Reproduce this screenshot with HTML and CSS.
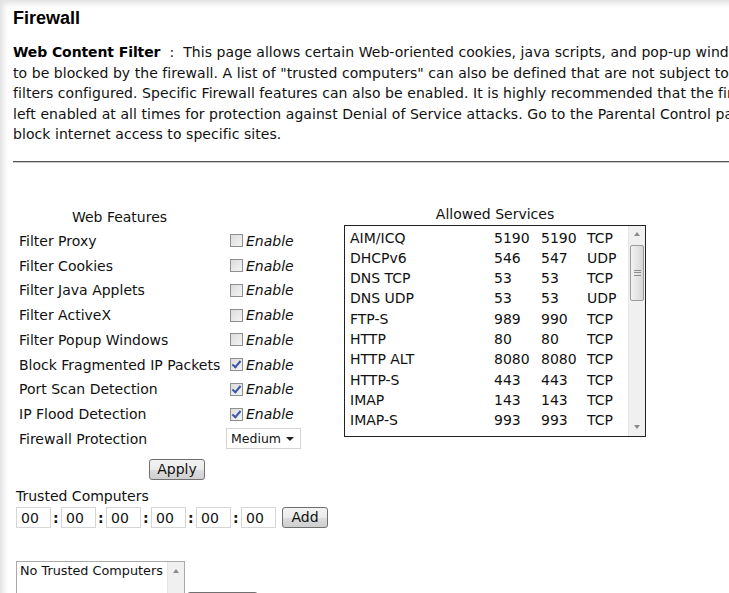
FILE: index.html
```html
<!DOCTYPE html>
<html>
<head>
<meta charset="utf-8">
<title>Firewall</title>
<link rel="stylesheet" href="styles.css">
</head>
<body>
<div class="page">
  <h1>Firewall</h1>
  <p class="intro"><b>Web Content Filter</b> &nbsp;:&nbsp; This page allows certain Web-oriented cookies, java scripts, and pop-up windows<br>
  to be blocked by the firewall. A list of "trusted computers" can also be defined that are not subject to the<br>
  filters configured. Specific Firewall features can also be enabled. It is highly recommended that the firewall be<br>
  left enabled at all times for protection against Denial of Service attacks. Go to the Parental Control page to<br>
  block internet access to specific sites.</p>
  <hr class="rule">

  <div class="panels">
    <div class="features">
      <div class="feat-head">Web Features</div>
      <div class="feat-row"><span class="feat-name">Filter Proxy</span><label class="chk"><input type="checkbox"><i>Enable</i></label></div>
      <div class="feat-row"><span class="feat-name">Filter Cookies</span><label class="chk"><input type="checkbox"><i>Enable</i></label></div>
      <div class="feat-row"><span class="feat-name">Filter Java Applets</span><label class="chk"><input type="checkbox"><i>Enable</i></label></div>
      <div class="feat-row"><span class="feat-name">Filter ActiveX</span><label class="chk"><input type="checkbox"><i>Enable</i></label></div>
      <div class="feat-row"><span class="feat-name">Filter Popup Windows</span><label class="chk"><input type="checkbox"><i>Enable</i></label></div>
      <div class="feat-row"><span class="feat-name">Block Fragmented IP Packets</span><label class="chk"><input type="checkbox" checked><i>Enable</i></label></div>
      <div class="feat-row"><span class="feat-name">Port Scan Detection</span><label class="chk"><input type="checkbox" checked><i>Enable</i></label></div>
      <div class="feat-row"><span class="feat-name">IP Flood Detection</span><label class="chk"><input type="checkbox" checked><i>Enable</i></label></div>
      <div class="feat-row"><span class="feat-name">Firewall Protection</span>
        <span class="sel">Medium<span class="arrow"></span></span>
      </div>
      <div class="apply-row"><button class="btn">Apply</button></div>
    </div>

    <div class="services">
      <div class="svc-head">Allowed Services</div>
      <div class="listbox">
        <div class="svc-list">
          <div class="svc"><span class="s-name">AIM/ICQ</span><span class="s-p1">5190</span><span class="s-p2">5190</span><span>TCP</span></div>
          <div class="svc"><span class="s-name">DHCPv6</span><span class="s-p1">546</span><span class="s-p2">547</span><span>UDP</span></div>
          <div class="svc"><span class="s-name">DNS TCP</span><span class="s-p1">53</span><span class="s-p2">53</span><span>TCP</span></div>
          <div class="svc"><span class="s-name">DNS UDP</span><span class="s-p1">53</span><span class="s-p2">53</span><span>UDP</span></div>
          <div class="svc"><span class="s-name">FTP-S</span><span class="s-p1">989</span><span class="s-p2">990</span><span>TCP</span></div>
          <div class="svc"><span class="s-name">HTTP</span><span class="s-p1">80</span><span class="s-p2">80</span><span>TCP</span></div>
          <div class="svc"><span class="s-name">HTTP ALT</span><span class="s-p1">8080</span><span class="s-p2">8080</span><span>TCP</span></div>
          <div class="svc"><span class="s-name">HTTP-S</span><span class="s-p1">443</span><span class="s-p2">443</span><span>TCP</span></div>
          <div class="svc"><span class="s-name">IMAP</span><span class="s-p1">143</span><span class="s-p2">143</span><span>TCP</span></div>
          <div class="svc"><span class="s-name">IMAP-S</span><span class="s-p1">993</span><span class="s-p2">993</span><span>TCP</span></div>
        </div>
        <div class="sbar">
          <span class="up"></span>
          <div class="track"><div class="thumb"><span class="grip"></span></div></div>
          <span class="down"></span>
        </div>
      </div>
    </div>
  </div>

  <div class="trusted">
    <div class="tr-head">Trusted Computers</div>
    <div class="mac">
      <input class="oct" value="00"><b>:</b>
      <input class="oct" value="00"><b>:</b>
      <input class="oct" value="00"><b>:</b>
      <input class="oct" value="00"><b>:</b>
      <input class="oct" value="00"><b>:</b>
      <input class="oct" value="00">
      <button class="btn add">Add</button>
    </div>
    <div class="tr-list-row">
      <div class="tr-list">
        <div class="tr-items">No Trusted Computers</div>
        <div class="sbar small"><span class="up"></span><div class="track"></div></div>
      </div>
      <button class="btn remove">Remove</button>
    </div>
  </div>
</div>
</body>
</html>
```

FILE: styles.css
```css
*{margin:0;padding:0;box-sizing:border-box;}
html,body{overflow:hidden;background:#fff;}
body{font-family:"DejaVu Sans",Verdana,sans-serif;font-size:14px;color:#111;}
.page{width:800px;min-height:593px;padding:0 0 0 13px;box-shadow:inset 6px 6px 6px -3px rgba(0,0,0,0.13);}

h1{font-family:"Liberation Sans",Arial,sans-serif;font-size:18px;font-weight:bold;color:#000;padding-top:6px;line-height:24px;}
.intro{margin-top:12px;line-height:20.5px;white-space:nowrap;letter-spacing:0.06px;}
.intro b{color:#000;letter-spacing:-0.1px;}
.rule{margin-top:16px;border:0;border-top:1px solid #555;border-bottom:1px solid #c8c8c8;height:2px;}

.panels{display:flex;margin-top:40px;}
.features{width:331px;}
.feat-head{width:213px;text-align:center;line-height:24px;margin-top:2px;}
.feat-row{display:flex;align-items:center;height:24.75px;}
.feat-name{width:213px;padding-left:6px;}
.chk{display:flex;align-items:center;}
.chk i{padding-left:3px;}
.chk input{appearance:none;-webkit-appearance:none;width:13px;height:13px;margin-left:4px;border:1px solid #8e8f8f;background:linear-gradient(135deg,#dcdcdc,#f4f4f4);position:relative;}
.chk input:checked::after{content:"";position:absolute;left:3px;top:0px;width:3px;height:7px;border:solid #3c55a8;border-width:0 2px 2px 0;transform:rotate(40deg);}

.sel{display:flex;align-items:center;justify-content:space-between;width:75px;height:21px;border:1px solid #d4d4d4;padding:0 6px 0 4px;font-size:12.5px;}
.arrow{width:0;height:0;border-left:4px solid transparent;border-right:4px solid transparent;border-top:4px solid #222;}

.apply-row{padding-left:136px;padding-top:8px;}
.btn{font-family:"DejaVu Sans",Verdana,sans-serif;font-size:14px;color:#111;height:21px;border:1px solid #707070;border-radius:3px;background:linear-gradient(#f2f2f2 0%,#ebebeb 50%,#dddddd 51%,#cfcfcf 100%);line-height:17px;}
.apply-row .btn{width:56px;}

.services{width:302px;}
.svc-head{text-align:center;line-height:22px;}
.listbox{display:flex;border:1px solid #222;height:212px;}
.svc-list{flex:1;padding:2px 0 0 5px;}
.svc{display:flex;line-height:20.33px;}
.s-name{width:144px;}
.s-p1{width:47px;}
.s-p2{width:46px;}

.sbar{width:17px;display:flex;flex-direction:column;background:#f0f0f0;border-left:1px solid #e6e6e6;}
.up,.down{height:17px;display:flex;align-items:center;justify-content:center;}
.up::after{content:"";border-left:3px solid transparent;border-right:3px solid transparent;border-bottom:4px solid #8a8a8a;}
.down::after{content:"";border-left:3px solid transparent;border-right:3px solid transparent;border-top:4px solid #8a8a8a;}
.track{flex:1;}
.thumb{height:56px;margin:2px 1px 0 1px;border:1px solid #9b9b9b;border-radius:2px;background:linear-gradient(90deg,#f2f2f2,#e2e2e2 60%,#d6d6d6);display:flex;align-items:center;justify-content:center;}
.grip{width:7px;height:6px;border-top:1px solid #8e8e8e;border-bottom:1px solid #8e8e8e;position:relative;}
.grip::after{content:"";position:absolute;left:0;right:0;top:1.5px;border-top:1px solid #8e8e8e;}

.trusted{padding-left:3px;margin-top:6px;}
.tr-head{line-height:20px;}
.mac{display:flex;align-items:center;margin-top:1px;}
.oct{width:35px;height:21px;border:1px solid #d6d6d6;font-family:"DejaVu Sans",Verdana,sans-serif;font-size:14px;padding-left:4px;color:#111;}
.mac b{width:10px;padding-left:2px;font-size:14px;}
.add{width:46px;margin-left:6px;}

.tr-list-row{display:flex;align-items:flex-start;margin-top:33px;}
.tr-list{display:flex;width:169px;height:60px;border:1px solid #aaa;}
.tr-items{flex:1;padding:1px 0 0 3px;white-space:nowrap;font-size:12.8px;}
.sbar.small{width:17px;}
.remove{width:71px;margin-left:2px;margin-top:31px;height:29px;}
```
